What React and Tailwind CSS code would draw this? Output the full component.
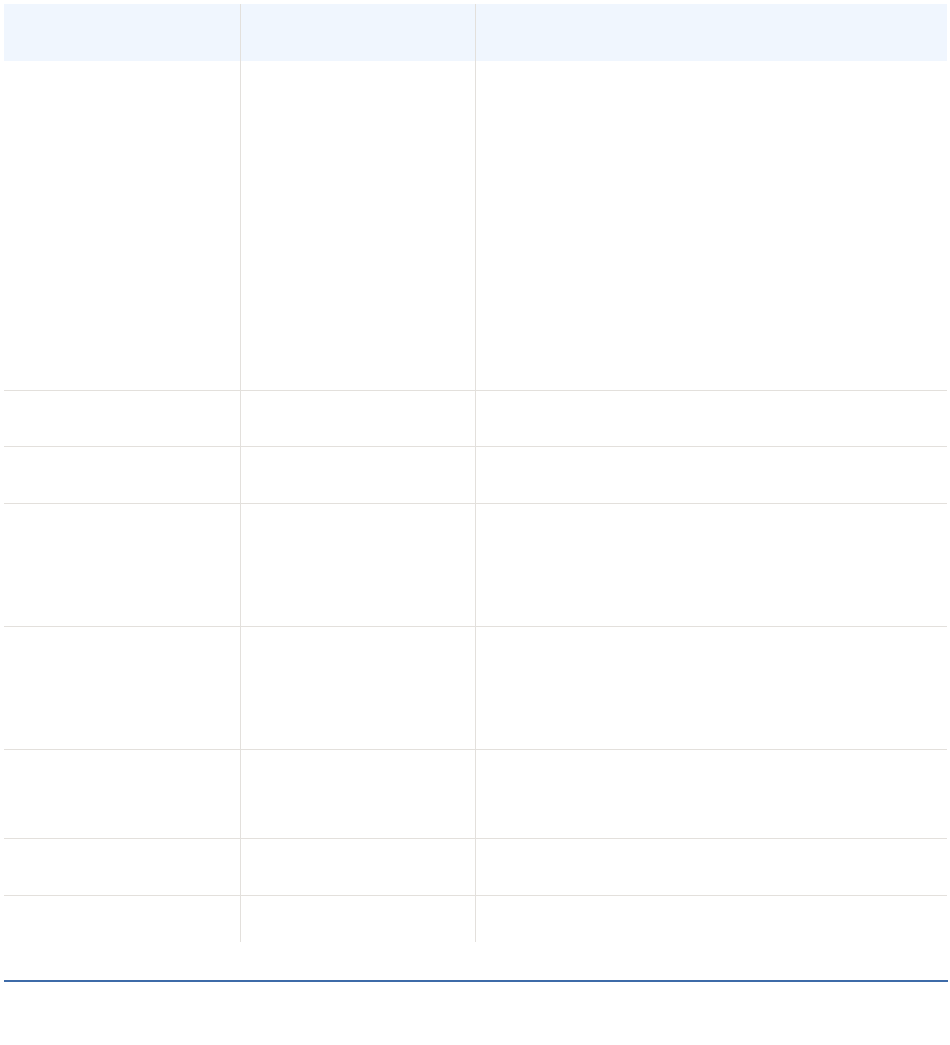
import React from "react";

const rows = [330, 56, 57, 123, 123, 89, 57, 46];

const Row = ({ height, last }) => (
  <div
    className={`flex ${last ? "" : "border-b border-[#e3e0dc]"}`}
    style={{ height }}
  >
    <div className="w-[237px] border-r border-[#e3e0dc]" />
    <div className="w-[235px] border-r border-[#e3e0dc]" />
    <div className="flex-1" />
  </div>
);

export default function App() {
  return (
    <div className="w-[950px] h-[1045px] bg-white font-['Liberation_Sans',sans-serif]">
      <div className="pt-1 pl-1 w-[947px]">
        <div className="flex h-[57px] bg-[#f0f6fe]">
          <div className="w-[237px] border-r border-[#e3e0dc]" />
          <div className="w-[235px] border-r border-[#e3e0dc]" />
          <div className="flex-1" />
        </div>
        {rows.map((h, idx) => (
          <Row key={idx} height={h} last={idx === rows.length - 1} />
        ))}
      </div>
      <div className="ml-1 mt-[38px] w-[944px] h-[2px] bg-[#3e6ba8]" />
    </div>
  );
}
